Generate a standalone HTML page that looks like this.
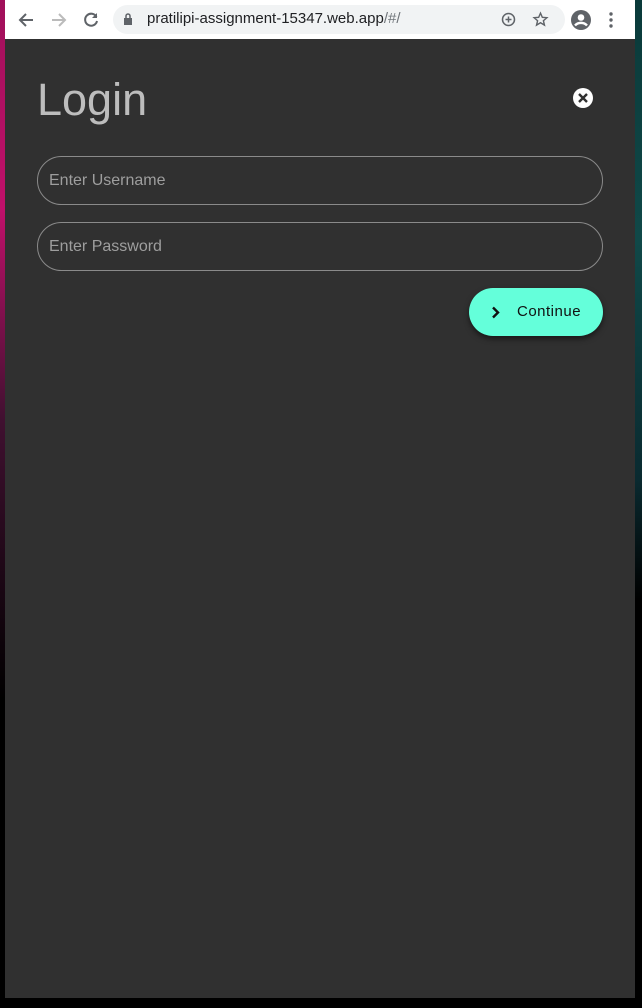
<!DOCTYPE html>
<html><head><style>
body{margin:0;width:642px;height:1008px;background:#000;position:relative;overflow:hidden;font-family:"Liberation Sans",sans-serif}
.l{position:absolute;left:0;top:0;width:5px;height:700px;background:linear-gradient(#a0105a,#c0106a 30%,#401030 60%,#000)}
.r{position:absolute;right:0;top:0;width:7px;height:600px;background:linear-gradient(#0a3a3a,#104848 40%,#0a2a30 80%,#000)}
.chrome{position:absolute;left:5px;top:0;width:630px;height:39px;background:#fff}
.url{position:absolute;left:108px;top:5px;width:452px;height:29px;border-radius:15px;background:#f1f3f4}
.page{position:absolute;left:5px;top:39px;width:630px;height:959px;background:#303030}
h1{position:absolute;left:32px;top:35px;margin:0;font-size:45px;font-weight:400;color:#bdbdbd}
.in{position:absolute;left:32px;width:564px;height:47px;border:1px solid #8a8a8a;border-radius:25px;color:#9e9e9e;font-size:16px;line-height:47px;text-indent:11px}
.btn{position:absolute;left:464px;top:249px;width:134px;height:48px;border-radius:24px;background:#64ffda;box-shadow:0 3px 6px rgba(0,0,0,.5);font-size:15px;letter-spacing:.5px;color:#111;line-height:48px}
</style></head><body>
<div class="l"></div><div class="r"></div>
<div class="chrome">
<svg style="position:absolute;left:12px;top:11px" width="18" height="18" viewBox="0 0 18 18"><path d="M16 9H3M9 3L3 9l6 6" stroke="#5f6368" stroke-width="2" fill="none"/></svg>
<svg style="position:absolute;left:45px;top:11px" width="18" height="18" viewBox="0 0 18 18"><path d="M2 9h13M9 3l6 6-6 6" stroke="#bbb" stroke-width="2" fill="none"/></svg>
<svg style="position:absolute;left:77px;top:11px" width="18" height="18" viewBox="0 0 18 18"><path d="M14.5 6A6 6 0 1 0 15 10" stroke="#5f6368" stroke-width="2" fill="none"/><path d="M15 2v5h-5z" fill="#5f6368"/></svg>
<div class="url"><svg style="position:absolute;left:10px;top:8px" width="10" height="13" viewBox="0 0 10 13"><rect x="1" y="5" width="8" height="7" fill="#5f6368"/><path d="M3 5V3a2 2 0 0 1 4 0v2" stroke="#5f6368" stroke-width="1.5" fill="none"/></svg>
<span style="position:absolute;left:34px;top:5px;font-size:15px;color:#202124">pratilipi-assignment-15347.web.app<span style="color:#70757a">/#/</span></span>
<svg style="position:absolute;left:388px;top:7px" width="15" height="15" viewBox="0 0 15 15"><circle cx="7.5" cy="7.5" r="6" stroke="#5f6368" stroke-width="1.5" fill="none"/><path d="M7.5 4.5v6M4.5 7.5h6" stroke="#5f6368" stroke-width="1.5"/></svg>
<svg style="position:absolute;left:419px;top:6px" width="17" height="17" viewBox="0 0 24 24"><path d="M12 3l2.6 6 6.4.5-4.9 4.2 1.5 6.3L12 16.6 6.4 20l1.5-6.3L3 9.5 9.4 9z" stroke="#5f6368" stroke-width="2" fill="none"/></svg></div>
<svg style="position:absolute;left:566px;top:10px" width="20" height="20" viewBox="0 0 20 20"><circle cx="10" cy="10" r="10" fill="#5f6368"/><circle cx="10" cy="7.5" r="3.3" fill="#fff"/><path d="M4 15.5c3-3.5 9-3.5 12 0" stroke="#fff" stroke-width="2.4" fill="none"/></svg>
<svg style="position:absolute;left:604px;top:12px" width="4" height="16" viewBox="0 0 4 16"><circle cx="2" cy="2" r="1.7" fill="#5f6368"/><circle cx="2" cy="8" r="1.7" fill="#5f6368"/><circle cx="2" cy="14" r="1.7" fill="#5f6368"/></svg>
</div>
<div class="page">
<h1>Login</h1>
<svg style="position:absolute;left:568px;top:49px" width="20" height="20" viewBox="0 0 20 20"><circle cx="10" cy="10" r="10" fill="#fff"/><path d="M6 6l8 8M14 6l-8 8" stroke="#303030" stroke-width="2.4"/></svg>
<div class="in" style="top:117px">Enter Username</div>
<div class="in" style="top:183px">Enter Password</div>
<div class="btn"><svg style="position:absolute;left:22px;top:18px" width="10" height="13" viewBox="0 0 10 13"><path d="M2 1.5l5 5-5 5" stroke="#111" stroke-width="2.4" fill="none"/></svg><span style="position:absolute;left:48px">Continue</span></div>
</div>
</body></html>
